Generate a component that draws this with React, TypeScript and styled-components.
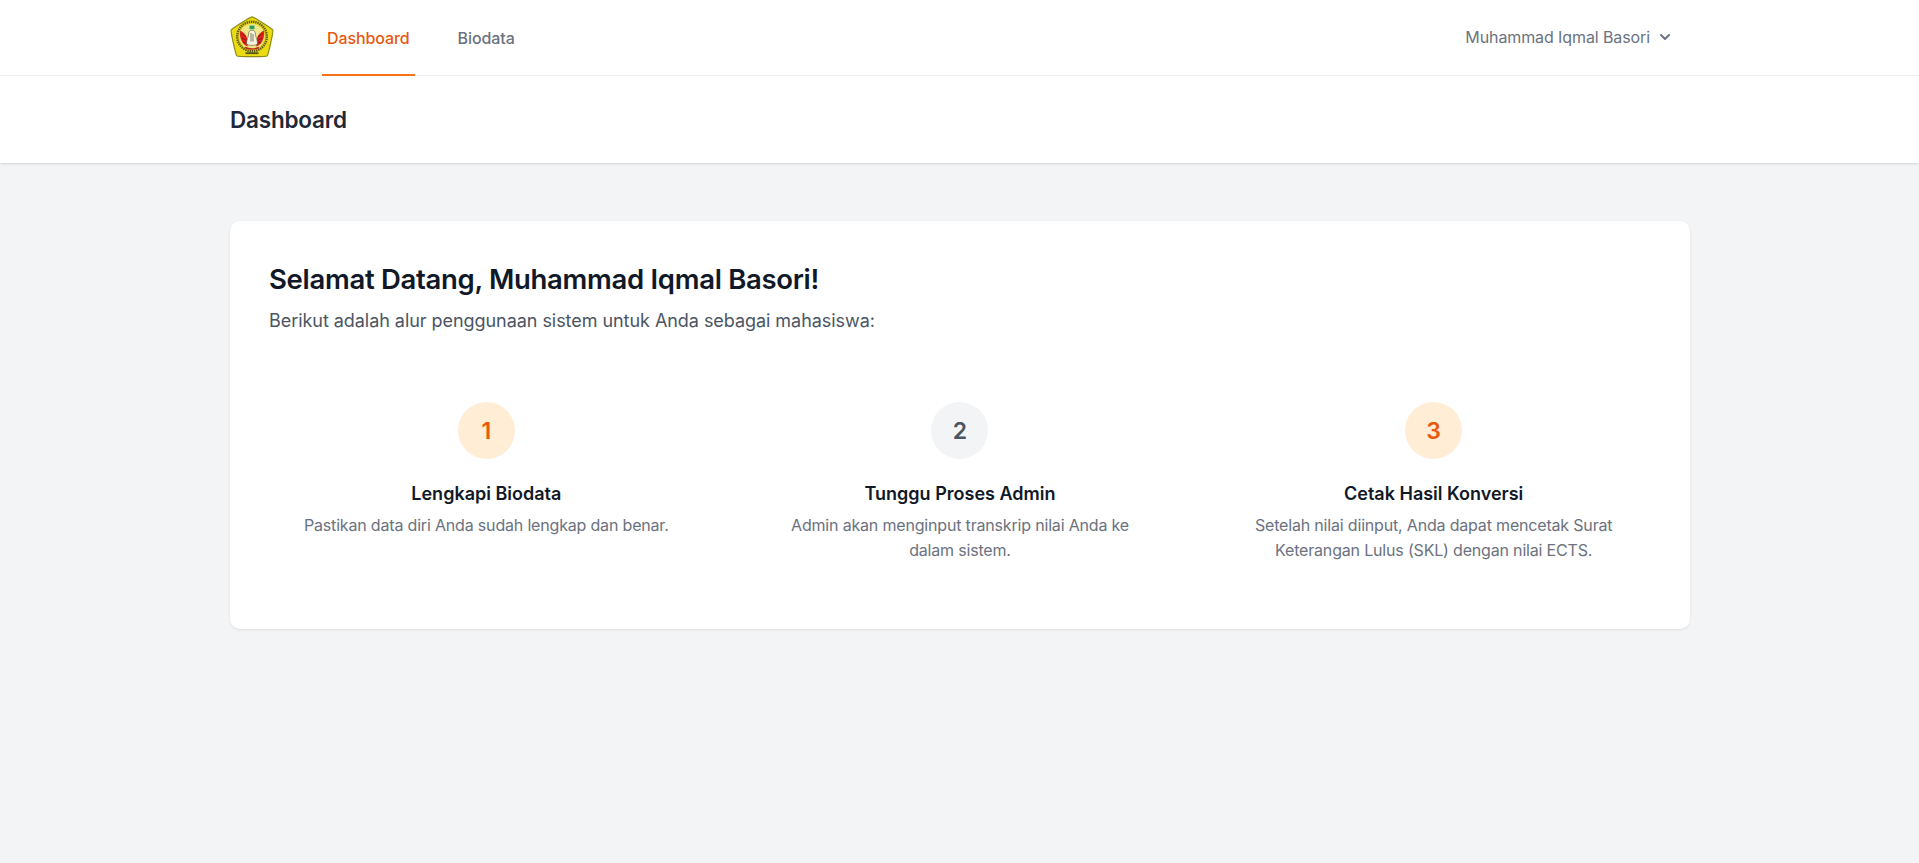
import React from "react";
import styled, { createGlobalStyle } from "styled-components";

const Global = createGlobalStyle`
  html, body { margin: 0; padding: 0; background: #f3f4f6; }
  body { font-family: "Inter", "Liberation Sans", sans-serif; }
  * { box-sizing: border-box; }
`;

const Page = styled.div`
  min-height: 100vh;
  background: #f3f4f6;
`;
const TopNav = styled.nav`
  background: #fff;
  border-bottom: 1px solid #f3f4f6;
  height: 76px;
`;
const Container = styled.div`
  width: 1460px;
  margin: 0 229px 0 230px;
`;
const NavRow = styled(Container)`
  height: 75px;
  display: flex;
  align-items: stretch;
  justify-content: space-between;
`;
const NavLeft = styled.div`
  display: flex;
  align-items: stretch;
`;
const LogoBox = styled.div`
  display: flex;
  align-items: center;
  width: 92px;
  padding-bottom: 1px;
`;
const NavLink = styled.a<{ $active?: boolean }>`
  display: flex;
  align-items: center;
  padding: 2px 5px 0;
  margin-right: 38px;
  height: 76px;
  font-size: 16px;
  letter-spacing: -0.1px;
  font-weight: 500;
  color: ${(p) => (p.$active ? "#ea580c" : "#6b7280")};
  border-bottom: 2px solid ${(p) => (p.$active ? "#f97316" : "transparent")};
`;
const UserMenu = styled.div`
  display: flex;
  align-items: center;
  gap: 5px;
  padding: 0 15px 2px 0;
  font-size: 16px;
  letter-spacing: -0.1px;
  font-weight: 400;
  color: #6b7280;
`;
const PageHeader = styled.header`
  background: #fff;
  height: 87px;
  box-shadow: 0 1px 3px 0 rgba(0, 0, 0, 0.1), 0 1px 2px -1px rgba(0, 0, 0, 0.1);
`;
const HeaderRow = styled(Container)`
  height: 87px;
  display: flex;
  align-items: center;
`;
const PageTitle = styled.h2`
  margin: 0;
  font-size: 22.5px;
  letter-spacing: -0.2px;
  font-weight: 600;
  color: #1f2937;
`;
const Main = styled.main`
  padding-top: 58px;
`;
const Card = styled(Container)`
  background: #fff;
  border-radius: 10px;
  box-shadow: 0 1px 3px 0 rgba(0, 0, 0, 0.08), 0 1px 2px -1px rgba(0, 0, 0, 0.06);
  padding: 41px 39px 0;
  height: 408px;
`;
const Heading = styled.h3`
  margin: 0;
  font-size: 27.5px;
  letter-spacing: -0.3px;
  line-height: 34px;
  font-weight: 600;
  color: #111827;
`;
const Lead = styled.p`
  margin: 10px 0 0;
  font-size: 18px;
  letter-spacing: -0.05px;
  line-height: 29px;
  color: #4b5563;
`;
const Steps = styled.div`
  margin-top: 48px;
  display: grid;
  grid-template-columns: repeat(3, 1fr);
  column-gap: 39px;
`;
const Step = styled.div`
  padding: 19px 30px;
  display: flex;
  flex-direction: column;
  align-items: center;
  text-align: center;
`;
const Badge = styled.div<{ $accent: boolean }>`
  width: 57px;
  height: 57px;
  border-radius: 50%;
  display: flex;
  align-items: center;
  justify-content: center;
  font-size: 23px;
  font-weight: 600;
  background: ${(p) => (p.$accent ? "#ffedd5" : "#f3f4f6")};
  color: ${(p) => (p.$accent ? "#ea580c" : "#4b5563")};
`;
const StepTitle = styled.h4`
  margin: 20px 0 0;
  font-size: 18px;
  line-height: 29px;
  font-weight: 600;
  color: #111827;
`;
const StepText = styled.p`
  margin: 5px 0 0;
  font-size: 16px;
  letter-spacing: -0.18px;
  line-height: 25px;
  color: #6b7280;
`;

const Logo = () => (
  <svg width="44" height="43" viewBox="0 0 44 43" aria-hidden="true">
    <path d="M22 .8C24 1 41 12 42.800 13.800 43.600 15 38.500 38 37.200 39.800 36 41 8 41 6.800 39.800 5.500 38 .4 15 1.200 13.800 3 12 20 1 22 .8Z" fill="#eadb12" stroke="#8f8a14" strokeWidth="1.200" />
    <circle cx="22" cy="20.500" r="14.800" fill="#e2d318" stroke="#5e5c1a" strokeWidth="2.400" strokeDasharray="1.400 .8" />
    <circle cx="22" cy="20.500" r="12.600" fill="#efe68a" />
    <path d="M10 14.500c3 1.500 6 4 7 7.500l.8 8.500C13 29.500 9 23 10 14.500Z" fill="#e0201c" />
    <path d="M34 14.500c-3 1.500-6 4-7 7.500l-.8 8.500c4.800-1 8.800-7.500 7.800-16Z" fill="#e0201c" />
    <path d="M11.500 17.500l4.500 3.500M32.500 17.500 28 21M11.500 22l5 2.500M32.500 22l-5 2.500M13 26l4 1.500M31 26l-4 1.500" stroke="#7f1d12" strokeWidth="1" />
    <rect x="19.200" y="9.200" width="5.600" height="4.200" rx=".6" fill="#2f9a46" stroke="#f4f2c2" strokeWidth=".6" />
    <path d="M22 14.200c2.600 0 3.500 2 3.500 4.500 0 2 2 5 2 8.500 0 1.500-2.400 2.200-5.500 2.200s-5.500-.7-5.500-2.200c0-3.500 2-6.500 2-8.500 0-2.500.9-4.500 3.500-4.500Z" fill="#f6f3e4" stroke="#5a5620" strokeWidth=".6" />
    <path d="M21 17v8.500M23 18v7.500" stroke="#6f6c48" strokeWidth=".9" />
    <path d="M15 31.500c4.500 2 9.500 2 14 0" stroke="#c22a18" strokeWidth="1.500" fill="none" />
    <rect x="15.500" y="36.300" width="13" height="1.800" fill="#55541a" />
  </svg>
);

const Chevron = () => (
  <svg width="20" height="20" viewBox="0 0 20 20" fill="#6b7280" aria-hidden="true">
    <path fillRule="evenodd" clipRule="evenodd" d="M5.293 7.293a1 1 0 011.414 0L10 10.586l3.293-3.293a1 1 0 111.414 1.414l-4 4a1 1 0 01-1.414 0l-4-4a1 1 0 010-1.414z" />
  </svg>
);

const steps = [
  { n: 1, accent: true, title: "Lengkapi Biodata", text: "Pastikan data diri Anda sudah lengkap dan benar." },
  { n: 2, accent: false, title: "Tunggu Proses Admin", text: "Admin akan menginput transkrip nilai Anda ke dalam sistem." },
  { n: 3, accent: true, title: "Cetak Hasil Konversi", text: "Setelah nilai diinput, Anda dapat mencetak Surat Keterangan Lulus (SKL) dengan nilai ECTS." },
];

export default function App() {
  return (
    <Page>
      <Global />
      <TopNav>
        <NavRow>
          <NavLeft>
            <LogoBox><Logo /></LogoBox>
            <NavLink $active>Dashboard</NavLink>
            <NavLink>Biodata</NavLink>
          </NavLeft>
          <UserMenu>
            Muhammad Iqmal Basori
            <Chevron />
          </UserMenu>
        </NavRow>
      </TopNav>
      <PageHeader>
        <HeaderRow>
          <PageTitle>Dashboard</PageTitle>
        </HeaderRow>
      </PageHeader>
      <Main>
        <Card>
          <Heading>Selamat Datang, Muhammad Iqmal Basori!</Heading>
          <Lead>Berikut adalah alur penggunaan sistem untuk Anda sebagai mahasiswa:</Lead>
          <Steps>
            {steps.map((s) => (
              <Step key={s.n}>
                <Badge $accent={s.accent}>{s.n}</Badge>
                <StepTitle>{s.title}</StepTitle>
                <StepText>{s.text}</StepText>
              </Step>
            ))}
          </Steps>
        </Card>
      </Main>
    </Page>
  );
}
